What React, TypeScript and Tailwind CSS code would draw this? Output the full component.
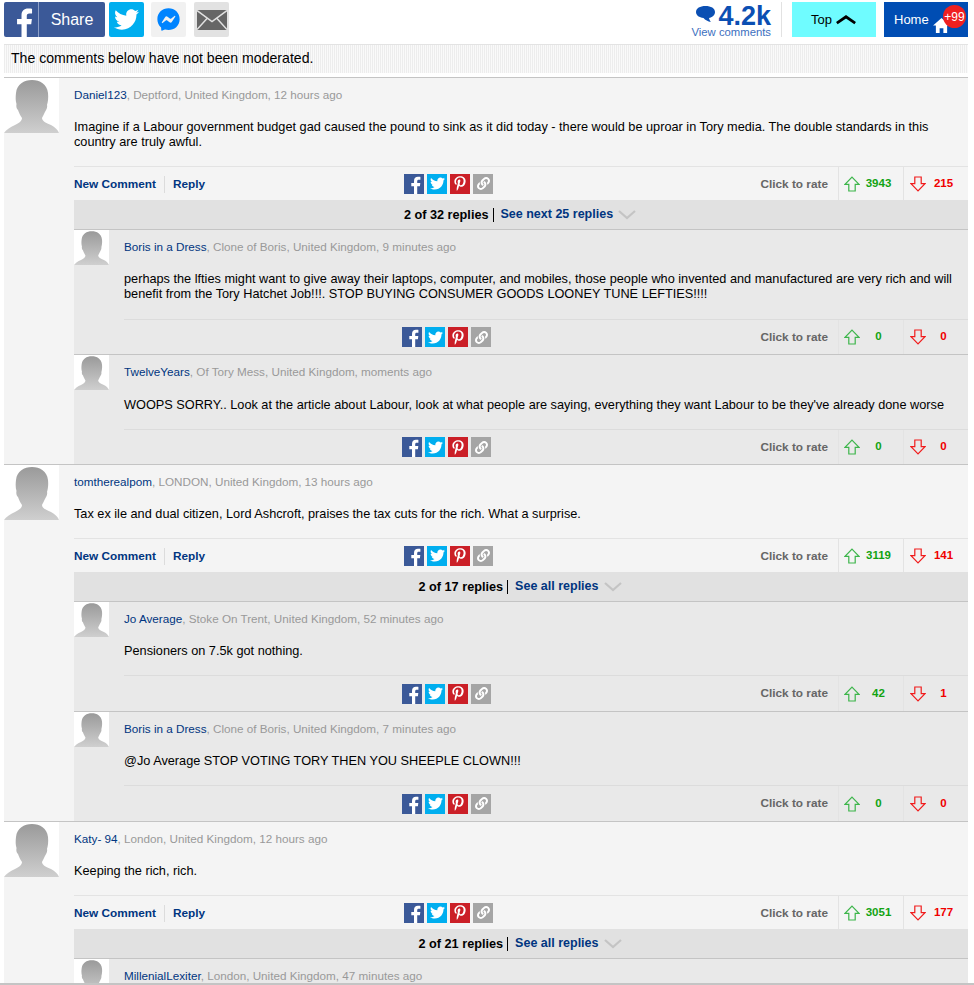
import { FaTwitter, FaPinterestP, FaLink, FaFacebookMessenger } from "react-icons/fa";

const F = ({ className }: { className: string }) => (
  <svg viewBox="0 0 20 20" className={className} fill="#fff">
    <path d="M13.2 20v-7.8h2.7l.4-3.1h-3.1V7.200c0-.9.3-1.500 1.600-1.500h1.600V2.900c-.3 0-1.300-.1-2.400-.1-2.400 0-4 1.400-4 4.100v2.200H7.300v3.100H10V20z" />
  </svg>
);

const Avatar = ({ size }: { size: "lg" | "sm" }) => (
  <svg viewBox="0 0 55 55" className={size === "lg" ? "w-[55px] h-[55px] shrink-0 bg-white block" : "w-[35px] h-[35px] shrink-0 bg-white block"}>
    <defs>
      <linearGradient id="sil" x1="0" y1="0" x2="0" y2="1">
        <stop offset="0" stopColor="#9a9a9a" />
        <stop offset="1" stopColor="#cfcfcf" />
      </linearGradient>
    </defs>
    <path
      fill="url(#sil)"
      d="M28 2C36 2 43 6 44 15C44.500 20 44 24 43 27C43.500 28 43 31 41.500 33C40 36 39 38 38 40C38 43 42 45 47 47C51 49 54 52 55 55H0C2 52 6 49 11 47C15 45 18 43 18 40C16 37 15 35 14 32C12.500 31 12 28 12.500 26C11.500 23 11.500 19 12 15C13 6 20 2 28 2Z"
    />
  </svg>
);

const Share = () => (
  <div className="flex gap-[3px]">
    <span className="w-5 h-5 bg-[#3b5998] flex items-end justify-center overflow-hidden">
      <F className="w-5 h-5" />
    </span>
    <span className="w-5 h-5 bg-[#00aeef] flex items-center justify-center">
      <FaTwitter className="w-[15px] h-[15px] text-white" />
    </span>
    <span className="w-5 h-5 bg-[#cb1f27] flex items-center justify-center">
      <FaPinterestP className="w-[14px] h-[15px] text-white" />
    </span>
    <span className="w-5 h-5 bg-[#a5a5a5] flex items-center justify-center">
      <FaLink className="w-[13px] h-[13px] text-white" />
    </span>
  </div>
);

const Arrow = ({ up }: { up: boolean }) => (
  <svg viewBox="0 0 16 16" className={up ? "w-4 h-4 block" : "w-4 h-4 block rotate-180"} fill="none" stroke={up ? "#3cb54a" : "#f01c1c"} strokeWidth="1.200">
    <path d="M8 1.200 15 8.300h-3.800V15H4.800V8.300H1z" />
  </svg>
);

const Rate = ({ up, down, low }: { up: string; down: string; low?: boolean }) => (
  <div className="ml-auto flex items-stretch h-full">
    <span className={low ? "text-[11.8px] font-bold text-[#666] self-center pr-[10px] pt-[3px]" : "text-[11.8px] font-bold text-[#666] self-center pr-[10px] pt-[1px]"}>Click to rate</span>
    <div className="w-[65px] border-l border-[#e3e3e3] flex items-center pl-[5px]">
      <Arrow up />
      <span className="w-[37px] text-center text-[11.5px] font-bold text-[#12a312]">{up}</span>
    </div>
    <div className="w-[65px] border-l border-[#e3e3e3] flex items-center pl-[6px]">
      <Arrow up={false} />
      <span className="w-[35px] text-center text-[11.5px] font-bold text-[#f00000]">{down}</span>
    </div>
  </div>
);

const Meta = ({ name, rest }: { name: string; rest: string }) => (
  <p className="text-[11.7px] leading-[16px] text-[#999]">
    <span className="text-[#003580]">{name}</span>, {rest}
  </p>
);

type R = { name: string; rest: string; body?: string; up?: string; down?: string; tall?: boolean; tight?: boolean };

const Reply = ({ name, rest, body, up, down, tall, tight, divided }: R & { divided: boolean }) => (
  <div className={divided ? "border-t border-[#c4c4c4] bg-[#e9e9e9] flex" : "bg-[#e9e9e9] flex"}>
    <Avatar size="sm" />
    <div className="flex-1 ml-[15px]">
      <div className="pt-[9px] h-[32px]">
        <Meta name={name} rest={rest} />
      </div>
      {body && up && down && (
        <>
          <p
            className={
              tall
                ? "text-[12.72px] leading-[15px] text-black mt-[9px] h-[48px]"
                : tight
                  ? "text-[12.72px] leading-[16px] text-black mt-[9px] h-[32px]"
                  : "text-[12.72px] leading-[16px] text-black mt-[10px] h-[32px]"
            }
          >
            {body}
          </p>
          <div className={tight ? "h-[36px] border-t border-[#dcdcdc] flex items-center" : "h-[35px] border-t border-[#dcdcdc] flex items-center"}>
            <div className="w-[278px]" />
            <Share />
            <Rate up={up} down={down} />
          </div>
        </>
      )}
    </div>
  </div>
);

type C = { name: string; rest: string; body: string; tall?: boolean; up: string; down: string; count: string; more: string; replies: R[] };

const Comment = ({ name, rest, body, tall, up, down, count, more, replies }: C) => (
  <div className="border-t border-[#c4c4c4] bg-[#f4f4f4] flex">
    <div className="w-[70px] shrink-0">
      <Avatar size="lg" />
    </div>
    <div className="flex-1 min-w-0">
      <div className="pt-[9px] h-[32px]">
        <Meta name={name} rest={rest} />
      </div>
      <p className={tall ? "text-[12.72px] leading-[15px] text-black mt-[9px] h-[47px]" : "text-[12.72px] leading-[16px] text-black mt-[9px] h-[32px]"}>{body}</p>
      <div className="h-[34px] border-t border-[#e3e3e3] flex items-center">
        <div className="w-[330px] pt-[2px] flex items-center text-[11.8px] font-bold text-[#003580]">
          <span className="pr-2 border-r border-[#dcdcdc]">New Comment</span>
          <span className="pl-2">Reply</span>
        </div>
        <Share />
        <Rate up={up} down={down} low />
      </div>
      <div className="h-[30px] bg-[#e1e1e1] border-b border-[#c4c4c4] flex items-center justify-center text-[12.5px] font-bold">
        <span className="text-black text-[12.7px] pr-1 border-r border-black leading-[14px]">{count}</span>
        <span className="text-[#003580] pl-[7px]">{more}</span>
        <svg viewBox="0 0 18 10" className="w-[18px] h-[10px] ml-[5px] mr-[2px]" fill="none" stroke="#c4c4c4" strokeWidth="2.200">
          <path d="M1 1l8 7 8-7" />
        </svg>
      </div>
      {replies.map((r, i) => (
        <Reply key={r.name + r.rest} divided={i > 0} {...r} />
      ))}
    </div>
  </div>
);

const data: C[] = [
  {
    name: "Daniel123",
    rest: "Deptford, United Kingdom, 12 hours ago",
    body: "Imagine if a Labour government budget gad caused the pound to sink as it did today - there would be uproar in Tory media. The double standards in this country are truly awful.",
    tall: true,
    up: "3943",
    down: "215",
    count: "2 of 32 replies",
    more: "See next 25 replies",
    replies: [
      {
        name: "Boris in a Dress",
        rest: "Clone of Boris, United Kingdom, 9 minutes ago",
        body: "perhaps the lfties might want to give away their laptops, computer, and mobiles, those people who invented and manufactured are very rich and will benefit from the Tory Hatchet Job!!!. STOP BUYING CONSUMER GOODS LOONEY TUNE LEFTIES!!!!",
        tall: true,
        up: "0",
        down: "0",
      },
      {
        name: "TwelveYears",
        rest: "Of Tory Mess, United Kingdom, moments ago",
        body: "WOOPS SORRY.. Look at the article about Labour, look at what people are saying, everything they want Labour to be they've already done worse",
        up: "0",
        down: "0",
      },
    ],
  },
  {
    name: "tomtherealpom",
    rest: "LONDON, United Kingdom, 13 hours ago",
    body: "Tax ex ile and dual citizen, Lord Ashcroft, praises the tax cuts for the rich. What a surprise.",
    up: "3119",
    down: "141",
    count: "2 of 17 replies",
    more: "See all replies",
    replies: [
      { name: "Jo Average", rest: "Stoke On Trent, United Kingdom, 52 minutes ago", body: "Pensioners on 7.5k got nothing.", up: "42", down: "1", tight: true },
      { name: "Boris in a Dress", rest: "Clone of Boris, United Kingdom, 7 minutes ago", body: "@Jo Average STOP VOTING TORY THEN YOU SHEEPLE CLOWN!!!", up: "0", down: "0", tight: true },
    ],
  },
  {
    name: "Katy- 94",
    rest: "London, United Kingdom, 12 hours ago",
    body: "Keeping the rich, rich.",
    up: "3051",
    down: "177",
    count: "2 of 21 replies",
    more: "See all replies",
    replies: [{ name: "MillenialLexiter", rest: "London, United Kingdom, 47 minutes ago" }],
  },
];

export default function App() {
  return (
    <div className="relative h-[985px] overflow-hidden bg-white font-['Liberation_Sans',Arial,sans-serif]">
      <div className="pl-[4px] pr-[6px]">
        <div className="h-[44px] pt-[2px] flex items-start">
          <div className="flex h-[35px] w-[101px] bg-[#3b5998] rounded-[2px] overflow-hidden">
            <span className="w-[35px] border-r border-[#8da0c8] flex items-end justify-center shrink-0">
              <F className="w-[33px] h-[33px]" />
            </span>
            <span className="flex-1 text-white text-[16px] flex items-center justify-center">Share</span>
          </div>
          <span className="ml-[4px] w-[35px] h-[35px] bg-[#00aeef] rounded-[2px] flex items-center justify-center">
            <FaTwitter className="w-[25px] h-[25px] text-white" />
          </span>
          <span className="ml-[7px] w-[35px] h-[35px] bg-[#f1f1f1] rounded-[2px] flex items-center justify-center">
            <FaFacebookMessenger className="w-[23px] h-[23px] text-[#0084ff]" />
          </span>
          <span className="ml-[8px] w-[35px] h-[35px] bg-[#e2e2e2] rounded-[2px] flex items-center justify-center">
            <svg viewBox="0 0 30 20" className="w-[30px] h-[20px]">
              <path fill="#666" d="M0 0h30v20H0z" />
              <path fill="none" stroke="#e2e2e2" strokeWidth="1.500" d="M0 .5l15 11 15-11M0 19.500l10-11M30 19.500l-10-11" />
            </svg>
          </span>
          <div className="ml-auto flex items-start">
            <div className="w-[80px] h-[35px] pt-[3px] flex flex-col items-end">
              <div className="flex items-center h-[22px] w-full justify-end">
                <svg viewBox="0 0 19 16" className="w-[19px] h-[16px] mr-[3px] -mt-[4px]" fill="#0b4fb3">
                  <path d="M9.500 0C15 0 19 2.300 19 6c0 3.400-3 5.600-6 6 .3 1.500.8 2.800 1.800 4-2.800-.6-5.600-2-7.300-4C3.300 11.500 0 9.500 0 6c0-3.700 4-6 9.500-6z" />
                </svg>
                <span className="text-[27px] leading-[22px] font-bold text-[#0b4fb3]">4.2k</span>
              </div>
              <span className="text-[11.3px] leading-[11px] text-[#3c6fc0] whitespace-nowrap">View comments</span>
            </div>
            <div className="w-px h-[35px] bg-[#e2e2e2] ml-[10px]" />
            <div className="ml-[10px] w-[84px] h-[35px] bg-[#6ffcff] flex items-center justify-center gap-[3px] text-[13px] text-black">
              Top
              <svg viewBox="0 0 22 12" className="w-[22px] h-[11px]" fill="none" stroke="#000" strokeWidth="3">
                <path d="M1 10l10-7 10 7" />
              </svg>
            </div>
            <div className="relative ml-[8px] w-[84px] h-[35px] bg-[#004db3] text-white text-[13px] flex items-center pl-[10px]">
              Home
              <svg viewBox="0 0 18 16" className="absolute left-[49px] top-[16px] w-[17px] h-[15px]" fill="#fff">
                <path d="M9 0l9 8h-3v8h-4v-5H7v5H3V8H0z" />
              </svg>
              <span className="absolute left-[59px] top-[3px] w-[23px] h-[23px] rounded-full bg-[#ef2020] text-white text-[12px] flex items-center justify-center">+99</span>
            </div>
          </div>
        </div>
        <div className="h-[29px] border-t border-[#e3e3e3] bg-[repeating-linear-gradient(90deg,#ededed_0,#ededed_1px,#fafafa_1px,#fafafa_2px)] text-[14.1px] text-black flex items-center pl-[7px]">
          The comments below have not been moderated.
        </div>
        <div className="mt-[4px]">
          {data.map((c) => (
            <Comment key={c.name} {...c} />
          ))}
        </div>
      </div>
      <div className="absolute left-0 right-0 bottom-0 h-[2px] bg-[#c4c4c4]" />
    </div>
  );
}
